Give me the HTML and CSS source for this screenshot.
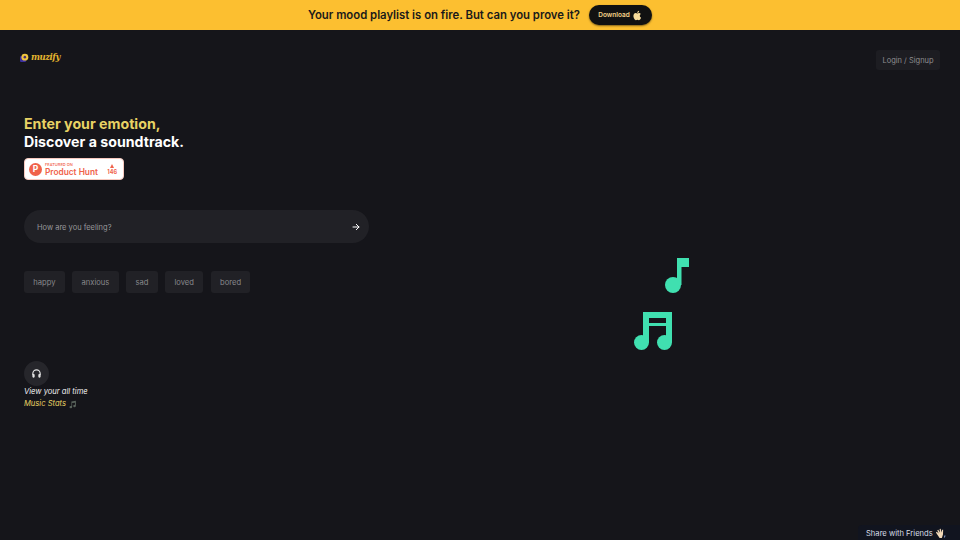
FILE: index.html
```html
<!DOCTYPE html>
<html lang="en">
<head>
    <meta charset="UTF-8">
    <meta name="viewport" content="width=device-width, initial-scale=1.0">
    <title>Muzify</title>
    <link rel="stylesheet" href="styles.css">
</head>
<body>

    <div class="banner">
        <span class="banner-text">Your mood playlist is on fire. But can you prove it?</span>
        <a class="download-btn" href="#">
            Download
            <svg class="apple-icon" viewBox="0 0 24 24"><path fill="#f8dc9a" d="M17.05 12.54c-.03-2.6 2.12-3.85 2.22-3.91-1.21-1.77-3.09-2.01-3.76-2.04-1.6-.16-3.12.94-3.93.94-.81 0-2.06-.92-3.39-.89-1.74.03-3.35 1.01-4.25 2.57-1.81 3.14-.46 7.79 1.3 10.34.86 1.25 1.89 2.65 3.24 2.6 1.3-.05 1.79-.84 3.36-.84 1.57 0 2.01.84 3.39.81 1.4-.02 2.28-1.27 3.14-2.53.99-1.45 1.39-2.85 1.42-2.92-.03-.01-2.72-1.05-2.74-4.13zM14.46 4.9c.72-.87 1.2-2.08 1.07-3.28-1.03.04-2.28.69-3.02 1.55-.66.77-1.24 2-1.09 3.18 1.15.09 2.33-.58 3.04-1.45z"/></svg>
        </a>
    </div>

    <header class="topbar">
        <a class="logo" href="#">
            <svg class="logo-mark" viewBox="0 0 12 12">
                <rect x="0" y="4" width="8" height="8" rx="1.5" fill="#3b2f9e"/>
                <circle cx="6.5" cy="5.5" r="4.6" fill="#f0c53c"/>
                <circle cx="6.5" cy="5.5" r="1.7" fill="#4a2f70"/>
            </svg>
            <span class="logo-text">muzify</span>
        </a>
        <button class="login-btn">Login / Signup</button>
    </header>

    <main class="hero">
        <section class="left">
            <h1 class="title">
                <span class="title-accent">Enter your emotion,</span><br>
                Discover a soundtrack.
            </h1>

            <a class="ph-badge" href="#">
                <span class="ph-logo">P</span>
                <span class="ph-name">
                    <small>FEATURED ON</small>
                    Product Hunt
                </span>
                <span class="ph-votes">
                    <i class="ph-arrow"></i>
                    146
                </span>
            </a>

            <div class="search">
                <span class="search-hint">How are you feeling?</span>
                <svg class="search-arrow" viewBox="0 0 24 24"><path fill="none" stroke="#fff" stroke-width="3" stroke-linecap="round" stroke-linejoin="round" d="M3 12h18M13 4l8 8-8 8"/></svg>
            </div>

            <div class="chips">
                <span class="chip">happy</span>
                <span class="chip">anxious</span>
                <span class="chip">sad</span>
                <span class="chip">loved</span>
                <span class="chip">bored</span>
            </div>

            <div class="stats">
                <span class="stats-icon">
                    <svg viewBox="0 0 24 24"><path fill="none" stroke="#e4e4e4" stroke-width="2.6" d="M4 15v-3a8 8 0 0 1 16 0v3"/><rect x="3" y="13" width="5" height="8" rx="2.2" fill="#e4e4e4"/><rect x="16" y="13" width="5" height="8" rx="2.2" fill="#e4e4e4"/></svg>
                </span>
                <p class="stats-line">View your all time</p>
                <p class="stats-line stats-accent">
                    Music Stats
                    <svg class="stats-note" viewBox="0 0 24 24"><path fill="#59635c" d="M9 4l12-2v14a3.500 3 0 1 1-2.400-2.800V7L11 8.300V19a3.500 3 0 1 1-2-2.700z"/></svg>
                </p>
            </div>
        </section>

        <section class="notes">
            <svg class="note note-single" viewBox="0 0 24 35">
                <circle cx="8" cy="27" r="8"/>
                <rect x="12" y="0" width="4.500" height="27"/>
                <rect x="12" y="0" width="12" height="9"/>
            </svg>
            <svg class="note note-double" viewBox="0 0 39 38">
                <circle cx="7.500" cy="30.500" r="7.500"/>
                <circle cx="30.500" cy="30.500" r="7.500"/>
                <rect x="9" y="0" width="6" height="30"/>
                <rect x="32" y="0" width="6" height="30"/>
                <rect x="9" y="0" width="29" height="6"/>
                <rect x="9" y="11" width="29" height="3"/>
            </svg>
        </section>
    </main>

    <button class="share-btn">
        Share with Friends
        <svg class="share-hand" viewBox="0 0 12 12"><path fill="#f2d9b8" d="M1 5l1-1 2 2-1.500-3.500 1-.5 2 3-.5-4 1.200-.2 1 4 .6-3 1.100.2-.2 5L7.500 11H5z"/><path fill="#8aa4d6" d="M10.500 8l1 .5-1 2-.8-.5z"/></svg>
    </button>

</body>
</html>
```

FILE: styles.css
```css
* {
    box-sizing: border-box;
}
body {
    font-family: Inter, "Liberation Sans", sans-serif;
    background-color: #15151a;
    color: #fff;
    margin: 0;
    height: 540px;
    overflow: hidden;
}
a {
    text-decoration: none;
}

.banner {
    height: 30px;
    background-color: #fcbf30;
    display: flex;
    justify-content: center;
    align-items: center;
    gap: 9px;
}
.banner-text {
    font-size: 11.33px;
    font-weight: 600;
    color: #1a1a1a;
}
.download-btn {
    height: 20px;
    width: 63px;
    background-color: #111;
    border-radius: 10px;
    box-shadow: 0 1px 2px rgba(0, 0, 0, 0.5);
    color: #f5d58a;
    font-size: 6.5px;
    font-weight: 600;
    display: flex;
    align-items: center;
    justify-content: center;
    gap: 2px;
}
.apple-icon {
    width: 11px;
    height: 11px;
}

.topbar {
    display: flex;
    justify-content: space-between;
    align-items: flex-start;
    padding: 20px 20px 0 20px;
}
.logo {
    display: flex;
    align-items: center;
    gap: 2px;
    height: 14px;
}
.logo-mark {
    width: 9px;
    height: 9px;
}
.logo-text {
    font-family: "DejaVu Serif", serif;
    font-style: italic;
    font-weight: 700;
    font-size: 8.5px;
    letter-spacing: -0.5px;
    color: #e4b52f;
}
.login-btn {
    height: 20px;
    width: 64px;
    padding: 0;
    background-color: #1d1d22;
    border: none;
    border-radius: 3px;
    color: #8d8d90;
    font-family: inherit;
    font-size: 7.5px;
}

.hero {
    display: flex;
    padding: 45px 24px 0 24px;
}
.left {
    width: 345px;
}
.title {
    margin: 0;
    font-size: 14.2px;
    line-height: 18px;
    font-weight: 700;
    color: #fff;
}
.title-accent {
    color: #e8d264;
}

.ph-badge {
    margin-top: 7px;
    width: 100px;
    height: 22px;
    background-color: #fff;
    border: 1px solid #f7c9bf;
    border-radius: 4px;
    display: flex;
    align-items: center;
    padding: 0 4px;
    color: #f0624a;
}
.ph-logo {
    width: 13px;
    height: 13px;
    border-radius: 50%;
    background-color: #f0624a;
    color: #fff;
    font-size: 8.5px;
    font-weight: 700;
    display: flex;
    align-items: center;
    justify-content: center;
    flex-shrink: 0;
}
.ph-name {
    margin-left: 3px;
    font-size: 8.3px;
    line-height: 8px;
    font-weight: 600;
    display: flex;
    flex-direction: column;
    gap: 1px;
    white-space: nowrap;
}
.ph-name small {
    font-size: 4px;
    line-height: 4px;
    font-weight: 500;
}
.ph-votes {
    margin-left: auto;
    margin-right: 2px;
    font-size: 5.5px;
    font-weight: 700;
    line-height: 6px;
    display: flex;
    flex-direction: column;
    align-items: center;
    gap: 1px;
}
.ph-arrow {
    width: 0;
    height: 0;
    border-left: 2.5px solid transparent;
    border-right: 2.5px solid transparent;
    border-bottom: 4px solid #f0624a;
}

.search {
    margin-top: 30px;
    height: 33px;
    background-color: #212126;
    border-radius: 17px;
    display: flex;
    align-items: center;
    justify-content: space-between;
    padding: 0 9px 0 13px;
}
.search-hint {
    padding-top: 1px;
    font-size: 7.5px;
    color: #98989b;
}
.search-arrow {
    width: 8px;
    height: 8px;
}

.chips {
    margin-top: 28px;
    display: flex;
    gap: 7.5px;
}
.chip {
    height: 22px;
    padding: 0 9.3px;
    background-color: #212126;
    border-radius: 3px;
    color: #88888c;
    font-size: 7.6px;
    display: flex;
    align-items: center;
}

.stats {
    margin-top: 68px;
}
.stats-icon {
    width: 25px;
    height: 25px;
    border-radius: 50%;
    background-color: #26262b;
    display: flex;
    align-items: center;
    justify-content: center;
}
.stats-icon svg {
    width: 11px;
    height: 11px;
}
.stats-line {
    margin: 0;
    font-size: 7.6px;
    line-height: 12px;
    font-style: italic;
    color: #f0f0f0;
}
.stats-accent {
    color: #e8d264;
    display: flex;
    align-items: center;
    gap: 2px;
}
.stats-note {
    width: 9px;
    height: 9px;
}

.notes {
    position: relative;
    flex: 1;
}
.note {
    position: absolute;
    fill: #40e0b0;
}
.note-single {
    left: 296px;
    top: 143px;
    width: 24px;
    height: 35px;
}
.note-double {
    left: 265px;
    top: 197px;
    width: 39px;
    height: 38px;
}

.share-btn {
    position: fixed;
    right: 0;
    bottom: 0;
    width: 102px;
    height: 15px;
    padding: 1px 0 0 8px;
    background-color: #11141f;
    border: none;
    border-radius: 4px 0 0 0;
    color: #d8dde6;
    font-family: inherit;
    font-size: 7.6px;
    display: flex;
    align-items: center;
    gap: 2px;
}
.share-hand {
    width: 11px;
    height: 11px;
}
```
